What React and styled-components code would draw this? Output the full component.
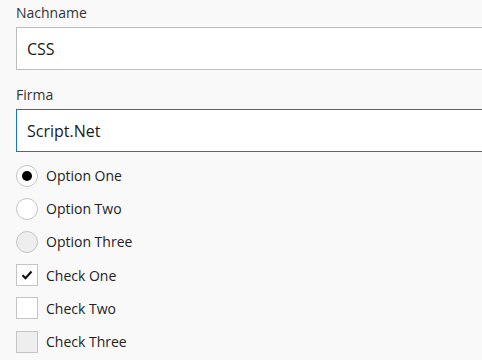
import styled, { createGlobalStyle } from "styled-components";

const GlobalStyle = createGlobalStyle`
  html, body {
    margin: 0;
    padding: 0;
    background: #f9f9f9;
    overflow: hidden;
  }
  body {
    font-family: "Open Sans", "Liberation Sans", sans-serif;
    color: #222;
  }
`;

const Form = styled.div`
  padding: 3px 0 0 16px;
  width: 482px;
  height: 360px;
  box-sizing: border-box;
  overflow: hidden;
`;

const Field = styled.div`
  display: flex;
  flex-direction: column;
  margin-bottom: 15px;
`;

const Label = styled.label`
  font-size: 14px;
  line-height: 20px;
  color: #333;
  margin-bottom: 4px;
`;

const Input = styled.div`
  width: 560px;
  height: 43px;
  box-sizing: border-box;
  background: #fff;
  border: 1px solid ${(p) => (p.$focused ? "#1a6fdb" : "#bdbdbd")};
  padding: 0 10px;
  display: flex;
  align-items: center;
  font-size: 16px;
  color: #1a1a1a;
`;

const Choices = styled.div`
  display: flex;
  flex-direction: column;
  margin-top: -8px;
`;

const Row = styled.div`
  display: flex;
  align-items: center;
  gap: 8px;
  height: 33.2px;
  font-size: 14px;
  color: #222;
`;

const Radio = styled.span`
  width: 22px;
  height: 22px;
  box-sizing: border-box;
  border-radius: 50%;
  border: 1px solid #c4c4c4;
  background: ${(p) => (p.$disabled ? "#eeeeee" : "#fff")};
  display: flex;
  align-items: center;
  justify-content: center;
  &::after {
    content: "";
    display: ${(p) => (p.$checked ? "block" : "none")};
    width: 10px;
    height: 10px;
    border-radius: 50%;
    background: #000;
  }
`;

const Box = styled.span`
  width: 22px;
  height: 22px;
  box-sizing: border-box;
  border: 1px solid #c4c4c4;
  background: ${(p) => (p.$disabled ? "#eeeeee" : "#fff")};
  display: flex;
  align-items: center;
  justify-content: center;
`;

const Check = () => (
  <svg width="12" height="10" viewBox="0 0 12 10">
    <path d="M1.5 5.2 L4.5 8.2 L10.5 1.5" fill="none" stroke="#111" strokeWidth="2.2" />
  </svg>
);

export default function App() {
  return (
    <>
      <GlobalStyle />
      <Form>
        <Field>
          <Label>Nachname</Label>
          <Input>CSS</Input>
        </Field>
        <Field>
          <Label>Firma</Label>
          <Input $focused>Script.Net</Input>
        </Field>
        <Choices>
          <Row>
            <Radio $checked />
            Option One
          </Row>
          <Row>
            <Radio />
            Option Two
          </Row>
          <Row>
            <Radio $disabled />
            Option Three
          </Row>
          <Row>
            <Box>
              <Check />
            </Box>
            Check One
          </Row>
          <Row>
            <Box />
            Check Two
          </Row>
          <Row>
            <Box $disabled />
            Check Three
          </Row>
        </Choices>
      </Form>
    </>
  );
}
